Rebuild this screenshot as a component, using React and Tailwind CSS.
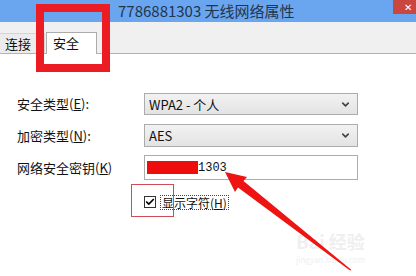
import { Check, ChevronDown } from "lucide-react";

const cjk = { fontFamily: '"Noto Sans CJK SC", "Noto Sans", sans-serif' };

function Select({ value }) {
    return (
        <div className="w-[214px] h-full flex items-center justify-between pl-[4px] pr-[6px] border border-[#acacac] bg-gradient-to-b from-[#f2f2f2] to-[#e3e3e3] text-[13px] text-[#111]">
            <span className="leading-none">{value}</span>
            <ChevronDown size={11} strokeWidth={3.5} className="text-[#444]" />
        </div>
    );
}

export default function App() {
    return (
        <div
            className="relative w-[416px] h-[276px] overflow-hidden bg-white flex flex-col"
            style={cjk}
        >
            {/* title bar */}
            <div className="h-[22px] bg-[#6aa5ef] flex items-start shrink-0">
                <span className="pl-[118px] text-[15px] leading-[22px] text-[#22354d]">
                    7786881303 无线网络属性
                </span>
                <div className="ml-auto w-[23px] h-[14px] bg-[#c9473f] text-white text-[10px] leading-[13px] pl-[11px] overflow-hidden">
                    ✕
                </div>
            </div>

            {/* tabs */}
            <div className="h-[32px] bg-[#f0f0f0] border-b border-[#b3b3b3] flex items-end shrink-0">
                <div className="w-[45px] h-[20px] border-t border-r border-[#d5d5d5] bg-[#ececec] text-[13px] leading-[19px] pl-[5px] text-[#111]">
                    连接
                </div>
                <div className="w-[51px] h-[22px] -mb-px ml-px bg-white border border-b-0 border-[#acacac] text-[13px] leading-[20px] pl-[6px] text-[#111]">
                    安全
                </div>
            </div>

            {/* form */}
            <div className="pt-[39px] flex flex-col text-[13px] text-[#111]">
                <div className="flex items-center h-[22px]">
                    <span className="w-[144px] pl-[17px]">安全类型(<u>E</u>):</span>
                    <Select value="WPA2 - 个人" />
                </div>
                <div className="flex items-center h-[23px] mt-[9px]">
                    <span className="w-[144px] pl-[17px]">加密类型(<u>N</u>):</span>
                    <Select value="AES" />
                </div>
                <div className="flex items-center h-[25px] mt-[8px]">
                    <span className="w-[144px] pl-[17px]">网络安全密钥(<u>K</u>)</span>
                    <div className="w-[214px] h-full border border-[#acacac] flex items-center pl-[2px]">
                        <div className="w-[51px] h-[13px] bg-[#ee0c0c]" />
                        <span
                            className="text-[12px] leading-none text-[#111]"
                            style={{ fontFamily: '"Liberation Mono", monospace' }}
                        >
                            1303
                        </span>
                    </div>
                </div>
                <div className="flex items-center h-[16px] mt-[14px] pl-[144px] gap-[4px]">
                    <div className="w-[12px] h-[12px] border border-[#333] bg-white flex items-center justify-center">
                        <Check size={10} strokeWidth={4} className="text-black" />
                    </div>
                    <span className="border border-dotted border-[#444] px-px text-[12px] leading-[13px]">
                        显示字符(<u>H</u>)
                    </span>
                </div>
            </div>

            {/* annotations */}
            <div className="absolute left-[36px] top-[4px] w-[74px] h-[68px] border-[8px] border-[#ec1c24]" />
            <div className="absolute left-[131px] top-[184px] w-[43px] h-[33px] border border-[#cf4b57]" />

            {/* watermark */}
            <div className="absolute left-[296px] top-[232px] flex flex-col items-center text-[#efefef] leading-none">
                <span className="text-[18px] font-bold">Bai 经验</span>
                <span className="text-[8px] mt-[6px]">jingyan.baidu.com</span>
            </div>

            <svg className="absolute left-0 top-0" width="416" height="276">
                <polygon
                    points="225,172 247,177 243.5,181 351.5,270 350,270.5 238,187.5 235,192"
                    fill="#ee1414"
                />
            </svg>
        </div>
    );
}
